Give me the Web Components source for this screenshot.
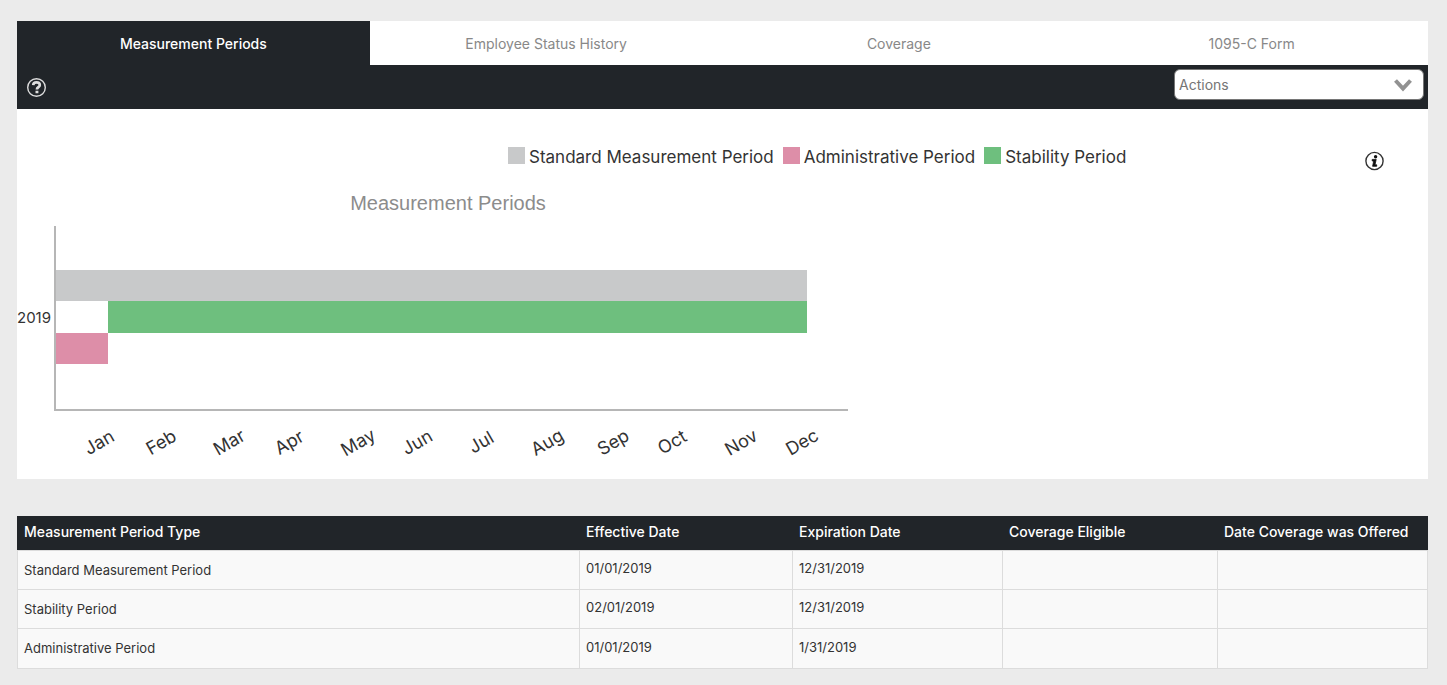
<!DOCTYPE html>
<html lang="en">
<head>
<meta charset="utf-8">
<title>Measurement Periods</title>
<style>
  body { margin: 0; background: #ebebeb; color: #333; font-family: Inter, "Liberation Sans", sans-serif; font-size: 14px; }
</style>
</head>
<body>
<aca-page></aca-page>
<script>
const define = (name, html, setup) => customElements.define(name, class extends HTMLElement {
  constructor() {
    super();
    this.attachShadow({ mode: 'open' }).innerHTML = html;
  }
  connectedCallback() { if (setup) setup(this, this.shadowRoot); }
});

define('nav-tab', `
  <style>
    :host { display: block; flex: 1; min-width: 0; }
    button { width: 100%; height: 44px; padding: 2px 0 0; border: 0; background: #fff; color: #888; font: inherit; line-height: 20px; cursor: pointer; }
    :host([active]) button { background: #212529; color: #fff; font-weight: 500; }
  </style>
  <button type="button" role="tab"><slot></slot></button>`,
  (host, root) => root.querySelector('button').setAttribute('aria-selected', host.hasAttribute('active')));

define('icon-button', `
  <style>
    :host { display: block; }
    button { display: block; padding: 0; border: 0; background: none; color: inherit; cursor: pointer; }
    ::slotted(svg) { display: block; width: 20px; height: 20px; }
  </style>
  <button type="button"><slot></slot></button>`,
  (host, root) => root.querySelector('button').setAttribute('aria-label', host.getAttribute('label')));

define('actions-menu', `
  <style>
    :host { display: grid; width: 250px; }
    select, svg { grid-area: 1 / 1; }
    select { appearance: none; height: 31px; padding: 0 40px 1px 4px; border: 1px solid #767676; border-radius: 6px; background: #fff; color: #757575; font: inherit; }
    svg { justify-self: end; align-self: center; width: 18px; height: 14px; margin-right: 12px; pointer-events: none; }
  </style>
  <select aria-label="Actions"><option>Actions</option></select>
  <svg viewBox="0 0 18 14" fill="none" stroke="#929292" stroke-width="4"><path d="M1.5 2.5 9 10.5 16.5 2.5"/></svg>`);

define('tool-bar', `
  <style>
    :host { display: flex; justify-content: space-between; align-items: center; box-sizing: border-box; height: 44px; padding: 0 4px 5px 9px; background: #212529; color: #ddd; }
    icon-button { padding-top: 4px; }
  </style>
  <icon-button label="Help"><svg viewBox="0 0 20 20" fill="none" stroke="currentColor">
    <circle cx="10.5" cy="10.5" r="8.8" stroke-width="1.4"/>
    <path d="M7.2 8.1C7.3 6.2 8.6 5.4 10.5 5.4s3.3 1 3.3 2.7c0 2.1-2.9 2.1-2.9 4.4" stroke-width="2.7"/>
    <path d="M9.5 15h2.9" stroke-width="2.5"/></svg></icon-button>
  <actions-menu></actions-menu>`);

define('legend-item', `
  <style>
    :host { display: flex; align-items: start; gap: 4px; }
    i { width: 17px; height: 17px; margin-top: 2px; background: var(--swatch); }
    span { padding-top: 2px; line-height: 20px; white-space: nowrap; }
  </style>
  <i></i><span><slot></slot></span>`);

define('chart-legend', `
  <style>
    :host { display: flex; gap: 9px; font-size: 17px; }
  </style>
  <legend-item style="--swatch:#c8c9ca">Standard Measurement Period</legend-item>
  <legend-item style="--swatch:#dd8ea8">Administrative Period</legend-item>
  <legend-item style="--swatch:#6ebf7e">Stability Period</legend-item>`);

const months = [['Jan', 82], ['Feb', 144], ['Mar', 212], ['Apr', 272], ['May', 341], ['Jun', 400],
  ['Jul', 464], ['Aug', 530], ['Sep', 596], ['Oct', 655], ['Nov', 724], ['Dec', 785]];

define('period-chart', `
  <style>
    :host { display: block; }
    svg { display: block; }
    text { fill: #333; font-size: 18px; }
    .title { fill: #8c8c8c; font: 20px "Liberation Sans", Arial, sans-serif; }
    .year { font-size: 15px; }
  </style>
  <svg width="840" height="290" role="img" aria-label="Measurement Periods for 2019">
    <text class="title" x="431" y="30" text-anchor="middle">Measurement Periods</text>
    <g shape-rendering="crispEdges">
      <rect x="39" y="90" width="751" height="31" fill="#c8c9ca"/>
      <rect x="91" y="121" width="699" height="32" fill="#6ebf7e"/>
      <rect x="39" y="153" width="52" height="31" fill="#dd8ea8"/>
    </g>
    <path d="M38 46V230H831" fill="none" stroke="#b6b6b6" stroke-width="2"/>
    <text class="year" x="34" y="143" text-anchor="end">2019</text>
    ${months.map(([m, x]) => `<text transform="translate(${x} 262) rotate(-30)" text-anchor="middle" dominant-baseline="central">${m}</text>`).join('')}
  </svg>`);

define('chart-panel', `
  <style>
    :host { display: block; padding: 36px 0 9px; background: #fff; }
    header { display: grid; grid-template-columns: 1fr auto; align-items: start; height: 35px; padding: 0 43px 0 34.8%; color: #333; }
    icon-button { padding-top: 6px; }
  </style>
  <header>
    <chart-legend></chart-legend>
    <icon-button label="Information"><svg viewBox="0 0 20 20" fill="none" stroke="currentColor">
      <circle cx="9.5" cy="10" r="8.6" stroke-width="1.4"/>
      <circle cx="10.6" cy="5.7" r="1.7" fill="#111" stroke="none"/>
      <path d="M7.2 8.4h4l-1.2 5.4h1.7v1.5H7.6l1.1-5.3H7.2z" fill="#111" stroke="#111" stroke-width=".8"/></svg></icon-button>
  </header>
  <period-chart></period-chart>`);

const rows = [
  ['Standard Measurement Period', '01/01/2019', '12/31/2019', '', ''],
  ['Stability Period', '02/01/2019', '12/31/2019', '', ''],
  ['Administrative Period', '01/01/2019', '1/31/2019', '', '']
];

define('period-table', `
  <style>
    :host { display: block; }
    table { width: 100%; border-collapse: separate; border-spacing: 0; table-layout: fixed; }
    th, td { box-sizing: border-box; padding: 0 0 0 7px; text-align: left; white-space: nowrap; }
    th { height: 34px; padding-bottom: 3px; background: #212529; color: #fff; font-size: 14px; font-weight: 500; }
    td { height: 39px; padding-left: 6px; padding-bottom: 4px; border: solid #dcdcdc; border-width: 0 0 1px 1px; background: #f9f9f9; font-size: 13px; }
    td:first-child { padding-bottom: 1px; }
    td:last-child { border-right-width: 1px; }
    tbody tr:first-child td { height: 40px; border-top-width: 1px; }
    tbody tr:last-child td { height: 40px; }
    .date { width: 213px; } .exp { width: 210px; } .cov { width: 215px; } .off { width: 211px; }
  </style>
  <table>
    <thead><tr><th scope="col">Measurement Period Type</th><th scope="col" class="date">Effective Date</th><th scope="col" class="exp">Expiration Date</th><th scope="col" class="cov">Coverage Eligible</th><th scope="col" class="off">Date Coverage was Offered</th></tr></thead>
    <tbody>${rows.map(r => `<tr>${r.map(c => `<td>${c}</td>`).join('')}</tr>`).join('')}</tbody>
  </table>`);

define('aca-page', `
  <style>
    :host { display: block; padding: 21px 19px 16px 17px; }
    nav { display: flex; }
    period-table { margin-top: 37px; }
  </style>
  <nav role="tablist" aria-label="Employee records">
    <nav-tab active>Measurement Periods</nav-tab>
    <nav-tab>Employee Status History</nav-tab>
    <nav-tab>Coverage</nav-tab>
    <nav-tab>1095-C Form</nav-tab>
  </nav>
  <tool-bar></tool-bar>
  <chart-panel></chart-panel>
  <period-table></period-table>`);
</script>
</body>
</html>
